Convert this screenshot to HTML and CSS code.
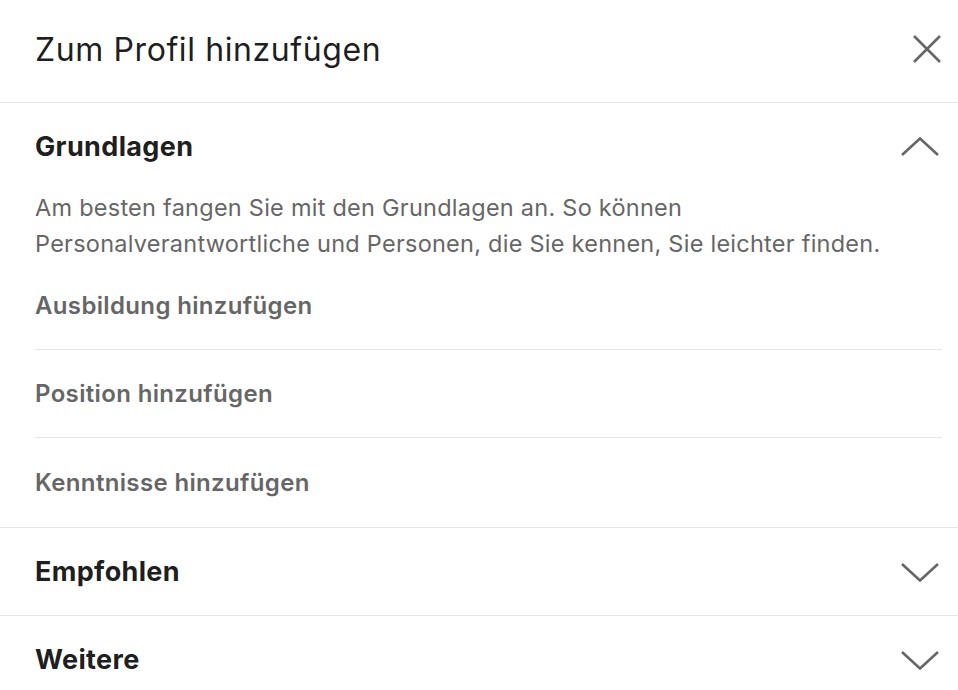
FILE: index.html
```html
<!DOCTYPE html>
<html lang="de">
<head>
<meta charset="utf-8">
<title>Zum Profil hinzufügen</title>
<link rel="stylesheet" href="styles.css">
</head>
<body>
<div class="dialog">
  <header class="dialog-header">
    <h1 class="dialog-title">Zum Profil hinzufügen</h1>
    <button class="icon-btn close" aria-label="Schließen">
      <svg width="30" height="30" viewBox="0 0 30 30"><path d="M2 2 L28 28 M28 2 L2 28" stroke="#666" stroke-width="2.6" fill="none"/></svg>
    </button>
  </header>

  <section class="section">
    <div class="section-head">
      <h2 class="section-title">Grundlagen</h2>
      <svg class="chev" width="40" height="20" viewBox="0 0 40 20"><path d="M2 18 L20 1.5 L38 18" stroke="#666" stroke-width="2.6" fill="none"/></svg>
    </div>
    <div class="section-desc-wrap">
      <p class="section-desc">Am besten fangen Sie mit den Grundlagen an. So können Personalverantwortliche und Personen, die Sie kennen, Sie leichter finden.</p>
    </div>
    <ul class="items">
      <li class="item">Ausbildung hinzufügen</li>
      <li class="item">Position hinzufügen</li>
      <li class="item">Kenntnisse hinzufügen</li>
    </ul>
  </section>

  <section class="section">
    <div class="section-head">
      <h2 class="section-title">Empfohlen</h2>
      <svg class="chev" width="40" height="20" viewBox="0 0 40 20"><path d="M2 2 L20 18.5 L38 2" stroke="#666" stroke-width="2.6" fill="none"/></svg>
    </div>
  </section>

  <section class="section">
    <div class="section-head">
      <h2 class="section-title">Weitere</h2>
      <svg class="chev" width="40" height="20" viewBox="0 0 40 20"><path d="M2 2 L20 18.5 L38 2" stroke="#666" stroke-width="2.6" fill="none"/></svg>
    </div>
  </section>
</div>
</body>
</html>
```

FILE: styles.css
```css
* { box-sizing: border-box; }
html, body { margin: 0; padding: 0; background: #fff; }
body {
  font-family: Inter, "Noto Sans", "Liberation Sans", sans-serif;
  color: rgba(0,0,0,0.9);
  overflow: hidden;
}
.dialog { width: 958px; }
.dialog-header {
  height: 103px;
  border-bottom: 1px solid #e6e6e6;
  display: flex;
  align-items: center;
  justify-content: space-between;
  padding: 0 16px 4px 35px;
}
.dialog-title {
  margin: 0;
  font-size: 32px;
  font-weight: 400;
  letter-spacing: 0.6px;
}
.icon-btn {
  border: 0;
  background: none;
  padding: 0;
  display: flex;
}
.section { border-bottom: 1px solid #e6e6e6; }
.section-head {
  height: 87px;
  display: flex;
  align-items: center;
  justify-content: space-between;
  padding: 0 18px 0 35px;
}
.section-title {
  margin: 0;
  font-size: 27px;
  font-weight: 700;
  letter-spacing: 0.35px;
  color: rgba(0,0,0,0.9);
}
.section-desc-wrap {
  padding: 0 16px 0 35px;
}
.section-desc {
  margin: 0;
  max-width: 880px;
  font-size: 23.5px;
  line-height: 36px;
  letter-spacing: 0.25px;
  color: #666;
}
.items {
  list-style: none;
  margin: 0 16px 0 35px;
  padding: 0;
}
.item {
  height: 88px;
  display: flex;
  align-items: center;
  font-size: 24px;
  font-weight: 600;
  letter-spacing: 0.35px;
  color: #666;
  border-bottom: 1px solid #e6e6e6;
}
.item:last-child { border-bottom: 0; height: 89px; }
```
